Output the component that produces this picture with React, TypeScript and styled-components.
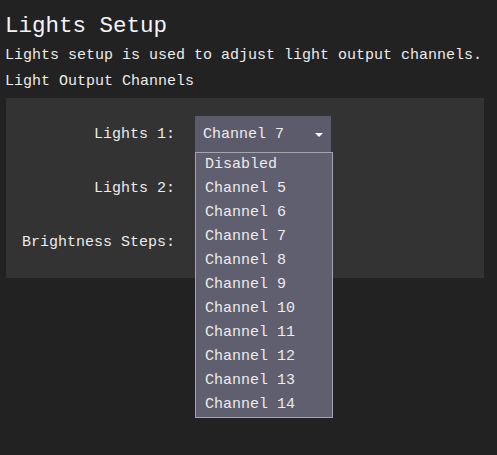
import React from "react";
import styled, { createGlobalStyle } from "styled-components";

const Global = createGlobalStyle`
  html, body { margin: 0; padding: 0; background: #222222; }
  body { font-family: "Liberation Mono", "DejaVu Sans Mono", monospace; color: #ececec; }
`;

const Page = styled.div`
  width: 497px;
  height: 455px;
  padding: 0 0 0 5px;
  box-sizing: border-box;
  display: flex;
  flex-direction: column;
`;

const Title = styled.h1`
  margin: 0;
  padding-top: 12px;
  font-family: "Liberation Mono", monospace;
  font-weight: normal;
  font-size: 22.5px;
  line-height: 28px;
  color: #f2f4fa;
`;

const Line = styled.div<{ $top?: number }>`
  margin-top: ${(p) => p.$top ?? 0}px;
  font-size: 15px;
  line-height: 26px;
  height: 26px;
  white-space: nowrap;
`;

const Panel = styled.div`
  margin: 3px 0 0 1px;
  width: 478px;
  height: 180px;
  box-sizing: border-box;
  background: #333333;
  padding-top: 18px;
  display: grid;
  grid-template-columns: 169px 136px;
  column-gap: 20px;
  row-gap: 18px;
  grid-auto-rows: 36px;
  align-items: center;
`;

const Label = styled.div`
  font-size: 15px;
  text-align: right;
  white-space: nowrap;
`;

const SelectBox = styled.div`
  position: relative;
  height: 36px;
  background: #5c5b6b;
  display: flex;
  align-items: center;
  justify-content: space-between;
  padding: 0 8px 0 8px;
  box-sizing: border-box;
  font-size: 15px;
`;

const Arrow = styled.span`
  width: 0;
  height: 0;
  border-left: 4px solid transparent;
  border-right: 4px solid transparent;
  border-top: 4px solid #ffffff;
  margin-top: 1px;
`;

const Menu = styled.ul`
  position: absolute;
  z-index: 5;
  top: 36px;
  left: 0;
  width: 138px;
  margin: 0;
  padding: 0;
  list-style: none;
  box-sizing: border-box;
  background: #605f6f;
  border: 1px solid #a4a4ae;
`;

const Item = styled.li`
  height: 24px;
  line-height: 24px;
  padding-left: 9px;
  font-size: 15px;
  white-space: nowrap;
`;

const options = [
  "Disabled",
  "Channel 5",
  "Channel 6",
  "Channel 7",
  "Channel 8",
  "Channel 9",
  "Channel 10",
  "Channel 11",
  "Channel 12",
  "Channel 13",
  "Channel 14",
];

export default function App() {
  return (
    <>
      <Global />
      <Page>
        <Title>Lights Setup</Title>
        <Line $top={3}>Lights setup is used to adjust light output channels.</Line>
        <Line>Light Output Channels</Line>
        <Panel>
          <Label>Lights 1:</Label>
          <SelectBox>
            <span>Channel 7</span>
            <Arrow />
            <Menu>
              {options.map((o) => (
                <Item key={o}>{o}</Item>
              ))}
            </Menu>
          </SelectBox>
          <Label>Lights 2:</Label>
          <SelectBox />
          <Label>Brightness Steps:</Label>
          <SelectBox />
        </Panel>
      </Page>
    </>
  );
}
